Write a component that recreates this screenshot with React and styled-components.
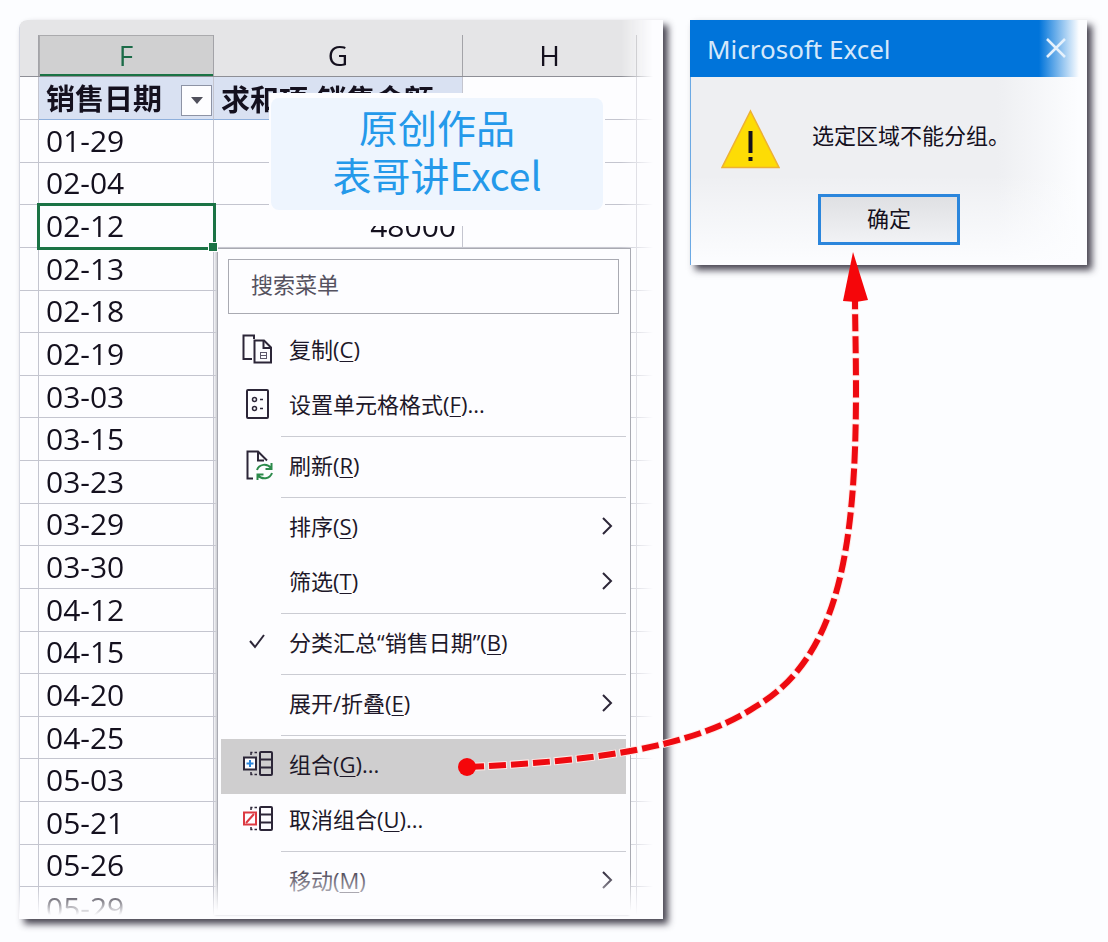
import React from 'react'
import styled, { createGlobalStyle } from 'styled-components'

const latin = `"Open Sans", "Noto Sans CJK SC", sans-serif`
const cjk = `"Noto Sans CJK SC", sans-serif`

const GlobalStyle = createGlobalStyle`
* { box-sizing: border-box; }
body {
  margin: 0;
  background: #fcfdff;
  color: #14101e;
  font-family: ${latin};
}
`

const Page = styled.main`
position: relative;
display: flex;
align-items: flex-start;
gap: 27px;
padding: 20px 21px 23px 19px;
min-height: 100vh;
`

const Sheet = styled.section`
position: relative;
flex: 644 1 0;
height: 899px;
border-radius: 8px 0 0 0;
background: #fdfdff;
box-shadow: 5px 5px 7px rgba(40, 36, 50, 0.85);
`

const Viewport = styled.div`
height: 100%;
overflow: hidden;
border-radius: 8px 0 0 0;
mask-image: linear-gradient(to top, transparent 4px, #000 32px),
  linear-gradient(to left, transparent 10px, #000 42px);
mask-composite: intersect;
`

const Grid = styled.table`
width: 100%;
height: 910px;
table-layout: fixed;
border-collapse: separate;
border-spacing: 0;
border-left: 1px solid #d5d8e2;
`

const Col = styled.col`
width: ${(p) => (p.$w ? `${p.$w}px` : 'auto')};
`

const HeadRow = styled.tr`
height: 57px;
background: #e5e5e7;
`

const TitleRow = styled.tr`
height: 43px;
`

const HeadCell = styled.th`
padding: 15px 0 0;
border-bottom: 1px solid #8e8f96;
font-weight: 400;
font-size: 28px;
line-height: 40px;
`

const Letter = styled.div`
height: 41px;
border-right: 1px solid #a3a3a8;
color: ${(p) => (p.$active ? '#1b6b48' : '#14101e')};
background: ${(p) => (p.$active ? '#d0d0d1' : 'transparent')};
box-shadow: ${(p) => (p.$active ? 'inset 1px 1px #aaaaad, inset 0 -2px #1b7345' : 'none')};
`

const Cell = styled.td`
padding: 0 6px 0 7px;
border-right: 1px solid #c4c5cf;
border-bottom: 1px solid ${(p) => (p.$title ? '#8fb0dc' : '#c4c5cf')};
background: ${(p) => (p.$title ? '#d9e1f2' : 'transparent')};
font-size: 30px;
line-height: 32px;
white-space: nowrap;
text-align: ${(p) => (p.$right ? 'right' : 'left')};
outline: ${(p) => (p.$selected ? '3px solid #1b7345' : 'none')};
outline-offset: -1px;
&:first-child, &:last-child { padding: 0; }
&:last-child { border-right: 0; }
`

const FieldTitle = styled.div`
display: flex;
align-items: flex-start;
justify-content: space-between;
margin-right: -5px;
font-family: ${cjk};
font-weight: 700;
font-size: 29px;
line-height: 34px;
`

const FilterButton = styled.button`
display: flex;
align-items: center;
justify-content: center;
width: 31px;
height: 31px;
margin-top: 5px;
padding: 0;
border: 1px solid #8d93a5;
background: #fdfdff;
`

const Handle = styled.span`
position: absolute;
left: 189px;
top: 222px;
width: 10px;
height: 10px;
border: 1px solid #fff;
background: #1b7345;
`

const Banner = styled.div`
position: absolute;
left: 250px;
top: 73px;
padding: 5px 2px 16px;
background: #fdfdff;
`

const BannerText = styled.p`
width: 332px;
margin: 0;
padding: 4px 0 12px;
border-radius: 8px;
background: #eef5fe;
color: #2499ea;
font-family: ${cjk};
font-size: 39px;
line-height: 48px;
text-align: center;
`

const Menu = styled.div`
position: absolute;
left: 198px;
top: 228px;
width: 414px;
height: 667px;
padding: 10px 4px 0 3px;
border: 1px solid #a9aab2;
border-bottom: 0;
background: #fdfdff;
box-shadow: -2px 0 2px #cfd0d6;

/* lets the last entries fade out */
&::after {
  content: '';
  position: absolute;
  left: -4px;
  right: -1px;
  bottom: 0;
  height: 44px;
  background: linear-gradient(to top, #fdfdff 4px, rgba(253, 253, 255, 0));
  pointer-events: none;
}
`

const Search = styled.input`
display: block;
width: 391px;
height: 55px;
margin: 0 0 10px 7px;
padding: 0 22px 7px;
border: 1px solid #a9aab2;
border-radius: 0;
background: #fdfdff;
font-family: ${cjk};
font-size: 22px;
&::placeholder { color: #55525f; opacity: 1; }
`

const Item = styled.button`
display: grid;
grid-template-columns: 31px 1fr 12px;
column-gap: 16px;
align-items: center;
width: 100%;
height: 55px;
padding: 0 13px 6px 21px;
border: 0;
background: ${(p) => (p.$active ? '#cfcecf' : 'transparent')};
color: ${(p) => (p.$faded ? '#4b4656' : '#1d1829')};
font-family: ${latin};
font-size: 22px;
line-height: 32px;
text-align: left;
white-space: nowrap;
`

const Key = styled.span`
text-decoration: underline;
text-decoration-thickness: 1px;
text-underline-offset: 3px;
`

const Separator = styled.hr`
height: 1px;
margin: 2px 0 3px 60px;
border: 0;
background: #cbccd3;
`

const Dialog = styled.section`
flex: 397 1 0;
background: linear-gradient(to top, #fcfdff, rgba(252, 253, 255, 0) 90px),
  linear-gradient(to left, #fcfdff 8px, #eeeff2 90px);
box-shadow: 5px 5px 7px rgba(40, 36, 50, 0.85);
`

const TitleBar = styled.header`
display: flex;
align-items: center;
justify-content: space-between;
height: 57px;
padding: 0 20px 0 17px;
background: linear-gradient(to left, #fcfdff 8px, #0074da 48px);
`

const Title = styled.h1`
margin: 0;
color: #d5e8fb;
font-family: "Noto Sans", sans-serif;
font-weight: 400;
font-size: 26px;
line-height: 36px;
`

const Close = styled.button`
display: flex;
padding: 0 0 2px;
border: 0;
background: none;
`

const DialogBody = styled.div`
display: flex;
flex-direction: column;
align-items: center;
padding: 32px 0 20px;
border-left: 1px solid #6ba9e4;
`

const Message = styled.div`
display: flex;
align-items: center;
gap: 32px;
width: 100%;
padding-left: 30px;
`

const MessageText = styled.p`
margin: 0 0 10px;
font-family: ${cjk};
font-size: 22px;
line-height: 32px;
`

const OkButton = styled.button`
width: 142px;
height: 51px;
margin-top: 25px;
padding: 0 0 5px;
border: 3px solid #2b86dc;
background: linear-gradient(#dfe0e3, #f1f2f5);
color: #14101e;
font-family: ${cjk};
font-size: 22px;
`

const Connector = styled.svg`
position: absolute;
left: 0;
top: 0;
width: 1108px;
height: 942px;
pointer-events: none;
`

const line = { fill: 'none', stroke: '#2c2638', strokeWidth: 2 }

const CopyIcon = () => (
  <svg width="31" height="30" viewBox="0 0 31 30" {...line}>
    <path d="M10 25H1.5V1.5H12V5" />
    <path d="M12.5 6.5H22L29 13.5V28.5H12.5Z" />
    <path d="M21.5 7V14H29" />
    <path d="M18 18.5H25M18 21.5H25M18 24.5H25M18.5 18V25M24.5 18V25" stroke="#5d586b" strokeWidth="1" />
  </svg>
)

const FormatIcon = () => (
  <svg width="31" height="30" viewBox="0 0 31 30" {...line}>
    <rect x="5" y="1" width="21" height="28" rx="1" />
    <circle cx="12.5" cy="10.5" r="2" strokeWidth="1.5" />
    <circle cx="12.5" cy="19.5" r="2" strokeWidth="1.5" />
    <path d="M18 10.5H21M18 19.5H21" strokeWidth="1.5" />
  </svg>
)

const RefreshIcon = () => (
  <svg width="31" height="30" viewBox="0 0 31 30" {...line}>
    <path d="M11 28.5H5.5V1.5H16L25 10.5" />
    <path d="M16 2V10.5H22" />
    <g stroke="#2c8a4b">
      <path d="M15 20C17 14 25 13 29 18M29.5 13V19H23.5" />
      <path d="M30 23C28 29 20 30 16 25.5M15.5 30V24.5H21.5" />
    </g>
  </svg>
)

const CheckIcon = () => (
  <svg width="31" height="30" viewBox="0 0 31 30" {...line}>
    <path d="M8 14L13 20L22 8" />
  </svg>
)

const RowsIcon = ({ children }) => (
  <svg width="31" height="30" viewBox="0 0 31 30" {...line}>
    <rect x="18" y="3" width="12" height="23" rx="1" />
    <path d="M18 10.5H30M18 18.5H30" />
    <path d="M9 6V3.5H15M9 23V25.5H15" strokeWidth="1.5" strokeDasharray="4 2" />
    {children}
  </svg>
)

const GroupIcon = () => (
  <RowsIcon>
    <rect x="2" y="8.5" width="12" height="12" fill="#fdfdff" />
    <path d="M8 11V18M4.5 14.5H11.5" stroke="#2b86dc" />
  </RowsIcon>
)

const UngroupIcon = () => (
  <RowsIcon>
    <rect x="2" y="8.5" width="12" height="12" fill="#fdfdff" stroke="#dc3a42" />
    <path d="M4 19L12 10" stroke="#dc3a42" />
  </RowsIcon>
)

const Chevron = () => (
  <svg width="12" height="18" viewBox="0 0 12 18" {...line}>
    <path d="M2 1L10 9L2 17" />
  </svg>
)

const dates = [
  '01-29', '02-04', '02-12', '02-13', '02-18', '02-19', '03-03', '03-15', '03-23', '03-29',
  '03-30', '04-12', '04-15', '04-20', '04-25', '05-03', '05-21', '05-26', '05-29',
]

const menu = [
  { text: '复制', k: 'C', Icon: CopyIcon },
  { text: '设置单元格格式', k: 'F', Icon: FormatIcon, dots: true },
  null,
  { text: '刷新', k: 'R', Icon: RefreshIcon },
  null,
  { text: '排序', k: 'S', sub: true },
  { text: '筛选', k: 'T', sub: true },
  null,
  { text: '分类汇总“销售日期”', k: 'B', Icon: CheckIcon },
  null,
  { text: '展开/折叠', k: 'E', sub: true },
  null,
  { text: '组合', k: 'G', Icon: GroupIcon, dots: true, active: true },
  { text: '取消组合', k: 'U', Icon: UngroupIcon, dots: true },
  null,
  { text: '移动', k: 'M', sub: true, faded: true },
]

// from the menu entry to the OK button
const route = 'M467 767C580 762 690 750 755 707C835 660 856 560 856 390C856 350 855 320 855 300'

const App = () => {
  return (
    <Page>
      <GlobalStyle />
      <Sheet>
        <Viewport>
          <Grid>
            <colgroup>
              <Col $w={19} />
              <Col $w={175} />
              <Col $w={249} />
              <Col $w={174} />
              <Col />
            </colgroup>
            <thead>
              <HeadRow>
                <HeadCell><Letter /></HeadCell>
                <HeadCell><Letter $active>F</Letter></HeadCell>
                <HeadCell><Letter>G</Letter></HeadCell>
                <HeadCell><Letter>H</Letter></HeadCell>
                <HeadCell />
              </HeadRow>
            </thead>
            <tbody>
              <TitleRow>
                <Cell />
                <Cell $title>
                  <FieldTitle>
                    销售日期
                    <FilterButton aria-label="筛选">
                      <svg width="12" height="7" viewBox="0 0 12 7"><path d="M0 0H12L6 7Z" fill="#50505c" /></svg>
                    </FilterButton>
                  </FieldTitle>
                </Cell>
                <Cell $title><FieldTitle>求和项:销售金额</FieldTitle></Cell>
                <Cell />
                <Cell />
              </TitleRow>
              {dates.map((d) => (
                <tr key={d}>
                  <Cell />
                  <Cell $selected={d === '02-12'}>{d}</Cell>
                  <Cell $right>{d === '02-12' ? '48000' : ''}</Cell>
                  <Cell />
                  <Cell />
                </tr>
              ))}
            </tbody>
          </Grid>
        </Viewport>
        <Banner>
          <BannerText>原创作品<br />表哥讲Excel</BannerText>
        </Banner>
        <Menu>
          <Search type="text" placeholder="搜索菜单" aria-label="搜索菜单" />
          {menu.map((m, i) =>
            m === null ? (
              <Separator key={i} />
            ) : (
              <Item key={i} $active={m.active} $faded={m.faded}>
                {m.Icon ? <m.Icon /> : <span />}
                <span>{m.text}(<Key>{m.k}</Key>){m.dots && '...'}</span>
                {m.sub && <Chevron />}
              </Item>
            )
          )}
        </Menu>
        <Handle />
      </Sheet>

      <Dialog role="alertdialog" aria-labelledby="title">
        <TitleBar>
          <Title id="title">Microsoft Excel</Title>
          <Close aria-label="关闭">
            <svg width="22" height="22" viewBox="0 0 22 22" fill="none" stroke="#e6f1fc" strokeWidth="2.5">
              <path d="M2 2L20 20M20 2L2 20" />
            </svg>
          </Close>
        </TitleBar>
        <DialogBody>
          <Message>
            <svg width="59" height="60" viewBox="0 0 59 60">
              <path d="M29.5 2L58 58.5H1Z" fill="#fddc05" stroke="#eeb133" strokeWidth="1.5" />
              <path d="M29.5 22V44M29.5 48V52" stroke="#14101e" strokeWidth="4" />
            </svg>
            <MessageText>选定区域不能分组。</MessageText>
          </Message>
          <OkButton>确定</OkButton>
        </DialogBody>
      </Dialog>

      <Connector viewBox="0 0 1108 942" aria-hidden="true">
        <g fill="none" stroke="#ee0a10">
          <path d={route} stroke="#ffe9e6" strokeWidth="8" strokeDasharray="19 3" strokeDashoffset="1" />
          <path d={route} strokeWidth="6" strokeDasharray="17 5" />
        </g>
        <circle cx="467" cy="767" r="9" fill="#f5060a" />
        <path d="M853 252L868 300L856 302L843 301Z" fill="#f5060a" />
      </Connector>
    </Page>
  )
}

export default App
